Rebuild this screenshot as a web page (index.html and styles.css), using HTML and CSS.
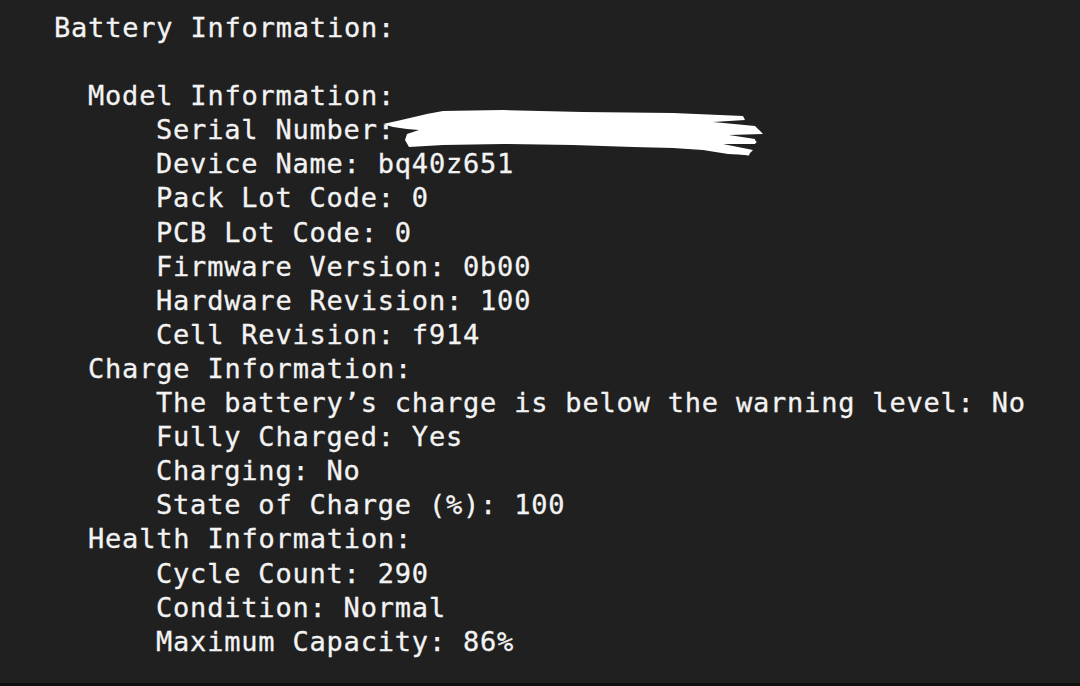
FILE: index.html
```html
<!DOCTYPE html>
<html lang="en">
<head>
<meta charset="utf-8">
<title>Battery Information</title>
<link rel="stylesheet" href="styles.css">
</head>
<body>
<main class="screen">
  <div class="term">
    <div class="line">Battery Information:</div>
    <div class="line blank">&nbsp;</div>
    <div class="line l1">Model Information:</div>
    <div class="line l2 serial">Serial Number:<svg class="redact" width="400" height="56" viewBox="0 0 400 56" aria-hidden="true"><path d="M0 14 C20 10 40 4 60 1 L120 0 L200 2 L290 3 L360 6 L362 10 L330 12 L372 16 L380 24 L346 25 L372 29 L372 34 L340 34 L370 40 L365 45 L345 44 L320 40 L290 38 L250 37 L190 35 L120 34 L60 35 L26 37 L22 30 L24 24 L36 20 L24 19 L10 17 Z" fill="#ffffff"/><path d="M326 37 L365 44 M330 30 L372 32 M318 20 L376 22" stroke="#ffffff" stroke-width="3" fill="none" stroke-linecap="round"/></svg></div>
    <div class="line l2">Device Name: bq40z651</div>
    <div class="line l2">Pack Lot Code: 0</div>
    <div class="line l2">PCB Lot Code: 0</div>
    <div class="line l2">Firmware Version: 0b00</div>
    <div class="line l2">Hardware Revision: 100</div>
    <div class="line l2">Cell Revision: f914</div>
    <div class="line l1">Charge Information:</div>
    <div class="line l2">The battery’s charge is below the warning level: No</div>
    <div class="line l2">Fully Charged: Yes</div>
    <div class="line l2">Charging: No</div>
    <div class="line l2">State of Charge (%): 100</div>
    <div class="line l1">Health Information:</div>
    <div class="line l2">Cycle Count: 290</div>
    <div class="line l2">Condition: Normal</div>
    <div class="line l2">Maximum Capacity: 86%</div>
  </div>
</main>
</body>
</html>
```

FILE: styles.css
```css
html, body {
  margin: 0;
  padding: 0;
  background: #202020;
}

.screen {
  box-sizing: border-box;
  width: 1080px;
  height: 686px;
  overflow: hidden;
  background: #202020;
  border-bottom: 3px solid #0f0f0f;
  padding: 11px 0 0 54px;
}

.term {
  display: flex;
  flex-direction: column;
  font-family: "DejaVu Sans Mono", "Liberation Mono", monospace;
  font-size: 27px;
  letter-spacing: 0.8px;
  line-height: 34.1px;
  color: #f3f3f3;
  white-space: pre;
  -webkit-text-stroke: 0.3px #f3f3f3;
}

.line {
  height: 34.1px;
}

.l1 {
  padding-left: 34px;
}

.l2 {
  padding-left: 102px;
}

.serial {
  position: relative;
}

.redact {
  position: absolute;
  left: 329px;
  top: -3px;
}
```
